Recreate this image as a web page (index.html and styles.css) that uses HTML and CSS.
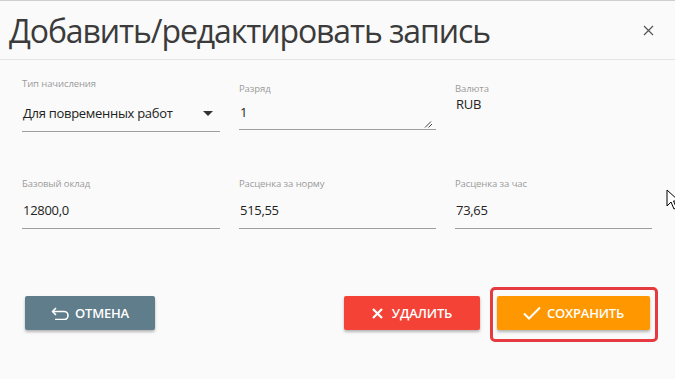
FILE: index.html
```html
<!DOCTYPE html>
<html lang="ru">
<head>
<meta charset="utf-8">
<title>Добавить/редактировать запись</title>
<link rel="stylesheet" href="styles.css">
</head>
<body>
<div class="dialog">
  <header class="dialog-header">
    <h1 class="dialog-title">Добавить/редактировать запись</h1>
    <button class="close-btn" aria-label="Закрыть">
      <svg width="11" height="11" viewBox="0 0 11 11"><path d="M1 1L10 10M10 1L1 10" stroke="#555" stroke-width="1.2" fill="none"/></svg>
    </button>
  </header>

  <section class="form-grid">
    <div class="field field-select">
      <label class="field-label">Тип начисления</label>
      <div class="field-value">
        <span>Для повременных работ</span>
        <svg class="caret" width="10" height="5" viewBox="0 0 10 5"><path d="M0 0H10L5 5Z" fill="#333"/></svg>
      </div>
    </div>
    <div class="field field-textarea">
      <label class="field-label">Разряд</label>
      <div class="field-value">
        <span>1</span>
        <svg class="resize" width="9" height="7" viewBox="0 0 9 7"><path d="M1 6.5L7 0.5M4.5 6.5L8 3" stroke="#444" stroke-width="1" fill="none"/></svg>
      </div>
    </div>
    <div class="field field-static">
      <label class="field-label">Валюта</label>
      <div class="field-value">RUB</div>
    </div>

    <div class="field field-row2">
      <label class="field-label">Базовый оклад</label>
      <div class="field-value">12800,0</div>
    </div>
    <div class="field field-row2">
      <label class="field-label">Расценка за норму</label>
      <div class="field-value">515,55</div>
    </div>
    <div class="field field-row2">
      <label class="field-label">Расценка за час</label>
      <div class="field-value">73,65</div>
    </div>
  </section>

  <footer class="dialog-footer">
    <button class="btn btn-cancel">
      <svg width="19" height="13" viewBox="0 0 19 13"><path d="M5 1L1.5 4.5L5 8M1.5 4.5H13a4 4 0 0 1 0 8H4" stroke="#fff" stroke-width="1.6" fill="none" stroke-linejoin="round"/></svg>
      ОТМЕНА
    </button>
    <div class="spacer"></div>
    <button class="btn btn-delete">
      <svg width="11" height="11" viewBox="0 0 11 11"><path d="M1 1L10 10M10 1L1 10" stroke="#fff" stroke-width="2.2" fill="none"/></svg>
      УДАЛИТЬ
    </button>
    <button class="btn btn-save">
      <svg width="18" height="14" viewBox="0 0 18 14"><path d="M1 7.5L6 12.5L17 1.5" stroke="#fff" stroke-width="2" fill="none"/></svg>
      СОХРАНИТЬ
    </button>
  </footer>

  <svg class="cursor" width="14" height="22" viewBox="0 0 14 22"><path d="M1 1V17L5 13L8 20L10.5 19L7.5 12H13Z" fill="#fff" stroke="#000" stroke-width="1" stroke-linejoin="round"/></svg>
</div>
</body>
</html>
```
FILE: styles.css
```css
* { box-sizing: border-box; }
html, body { margin: 0; padding: 0; }
body {
  background: #fafafa;
  font-family: "Open Sans", "Noto Sans", sans-serif;
  color: #222;
  width: 675px;
  height: 379px;
  overflow: hidden;
}
.dialog {
  position: relative;
  height: 379px;
  border-top: 1px solid #cfcfcf;
}
.dialog-header {
  height: 59px;
  display: flex;
  align-items: center;
  justify-content: space-between;
  padding: 0 21px 0 9px;
  border-bottom: 1px solid #e4e4e4;
}
.dialog-title {
  margin: 0;
  font-weight: 400;
  font-size: 32px;
  color: #3b3b3b;
  letter-spacing: -1.1px;
  line-height: 40px;
  padding-top: 2px;
}
.close-btn {
  background: none;
  border: 0;
  padding: 0;
  width: 12px;
  height: 12px;
  display: flex;
  align-items: center;
  justify-content: center;
  margin-top: 0;
}
.form-grid {
  display: grid;
  grid-template-columns: 198px 197px 197px;
  column-gap: 19px;
  align-items: start;
  padding: 0 23px 0 22px;
}
.field-label {
  display: block;
  font-size: 9.5px;
  line-height: 14px;
  color: #9a9a9a;
  letter-spacing: -0.1px;
}
.field-value {
  font-size: 13px;
  color: #222;
  display: flex;
  align-items: center;
  justify-content: space-between;
  letter-spacing: -0.3px;
}
.field-select { padding-top: 17px; }
.field-select .field-value {
  height: 41px;
  padding: 4px 7px 0 1px;
  border-bottom: 1px solid #9e9e9e;
}
.field-textarea { padding-top: 22px; }
.field-textarea .field-value {
  height: 34px;
  padding: 0 4px 2px 1px;
  border-bottom: 1px solid #9e9e9e;
  position: relative;
}
.resize { position: absolute; right: 3px; bottom: 1px; }
.field-static { padding-top: 22px; }
.field-static .field-value { height: 16px; padding-left: 1px; }
.field-row2 { margin-top: 45px; }
.field-row2 .field-value {
  height: 38px;
  padding: 1px 0 0 1px;
  border-bottom: 1px solid #9e9e9e;
}
.dialog-footer {
  display: flex;
  align-items: flex-start;
  padding: 67px 25px 0 25px;
}
.spacer { flex: 1; }
.btn {
  height: 34px;
  border: 0;
  border-radius: 2px;
  color: #fff;
  font-family: "Open Sans", "Noto Sans", sans-serif;
  font-size: 13px;
  font-weight: 600;
  letter-spacing: -0.2px;
  display: flex;
  align-items: center;
  justify-content: center;
  gap: 5px;
  box-shadow: 0 2px 3px rgba(0,0,0,0.28);
  padding: 0;
}
.btn-cancel { width: 130px; background: #607d8b; }
.btn-delete { width: 136px; background: #f44336; gap: 9px; }
.btn-save { width: 153px; background: #ff9800; margin-left: 17px; position: relative; gap: 6px; }
.btn-save::after {
  content: "";
  position: absolute;
  left: -7px; right: -8px; top: -9px; bottom: -12px;
  border: 3px solid #e53a3f;
  border-radius: 5px;
}
.cursor { position: absolute; left: 666px; top: 188px; }
```
